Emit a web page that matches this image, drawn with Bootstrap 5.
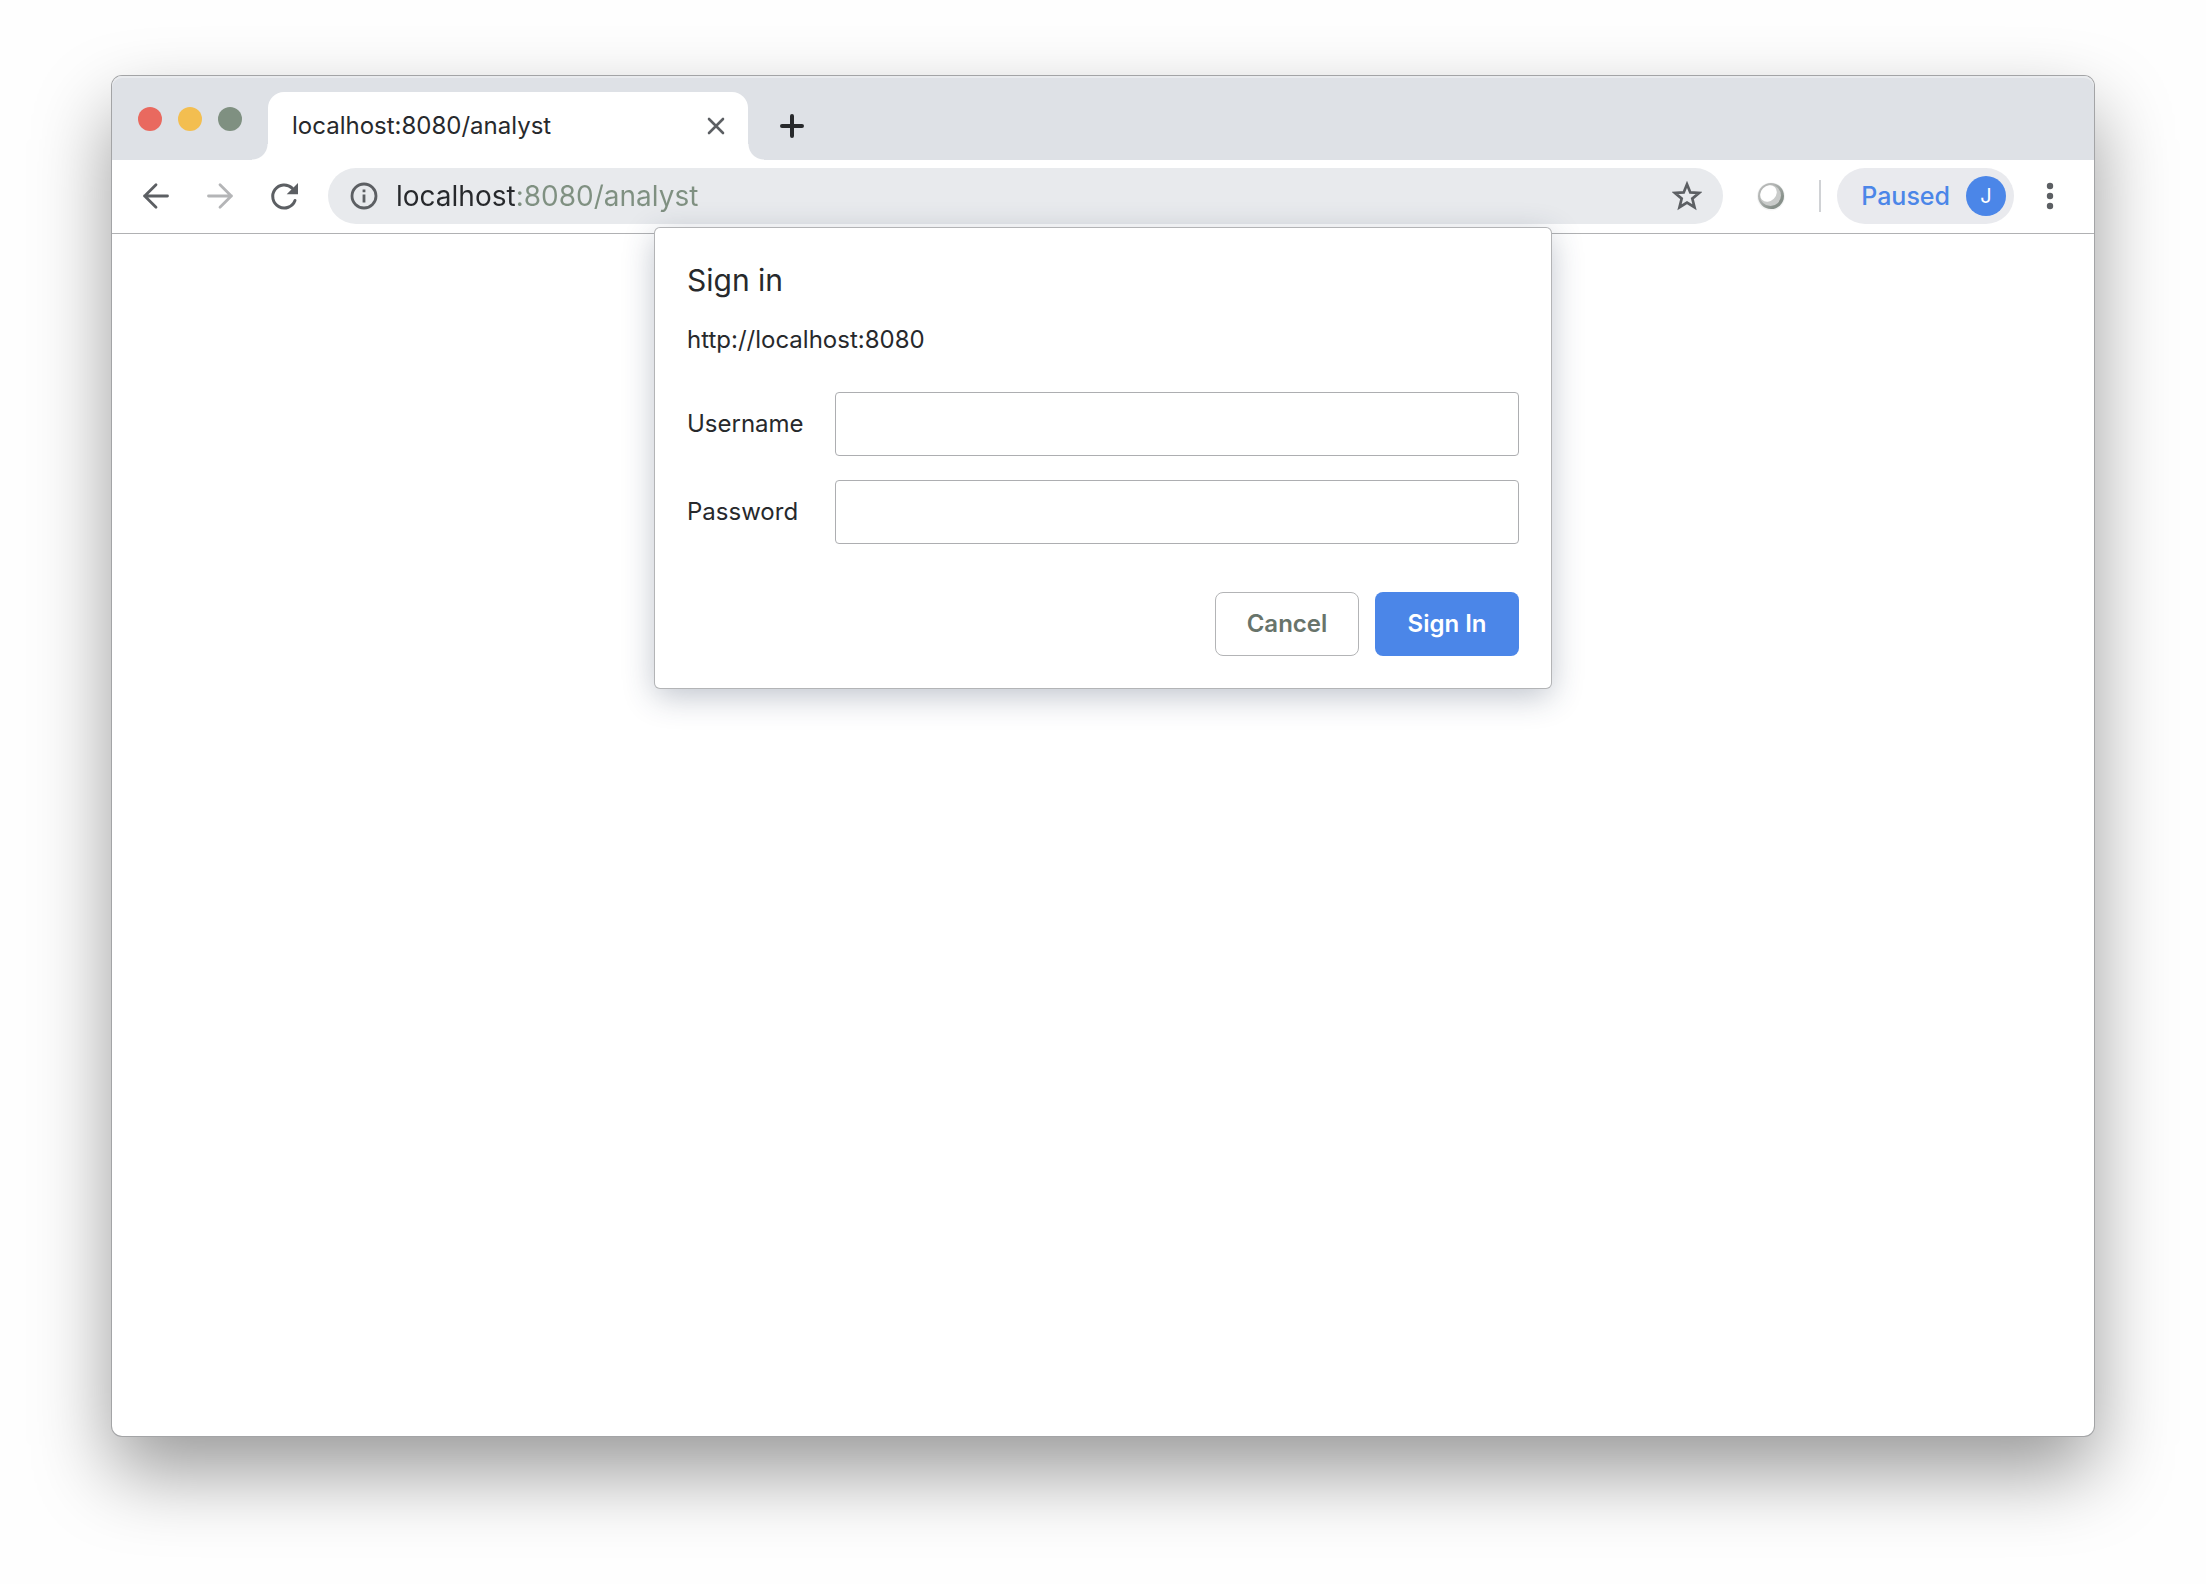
<!DOCTYPE html>
<html lang="en">
<head>
<meta charset="utf-8">
<meta name="viewport" content="width=device-width, initial-scale=1">
<title>localhost:8080/analyst</title>
<link rel="stylesheet" href="https://cdn.jsdelivr.net/npm/bootstrap@5.3.0/dist/css/bootstrap.min.css">
<style>
  :root {
    --ink: #27292c;
    --icon: #5c5f63;
    --sage: #7f9081;
    --strip: #dee1e6;
    --field: #e8eaed;
    --blue: #4b86e8;
  }
  body {
    font-family: Inter, "Liberation Sans", sans-serif;
    font-size: 24px;
    line-height: 32px;
    color: var(--ink);
    background: #fefefe;
    padding: 76px 112px 148px;
  }
  .browser {
    border-radius: 10px;
    background: #fff;
    box-shadow: 0 0 0 1px #a3a4a6, 0 36px 78px rgba(0, 0, 0, .4);
  }
  .tab-strip {
    height: 84px;
    padding: 16px 26px 0;
    background: var(--strip);
    border-radius: 10px 10px 0 0;
    box-shadow: inset 0 2px #e9ebee;
  }
  .lights { gap: 16px; margin-right: 26px; padding-top: 15px; }
  .light { width: 24px; height: 24px; border-radius: 50%; }
  .light-close { background: #e9695f; }
  .light-min { background: #f3be50; }
  .light-max { background: var(--sage); }
  .page-tab {
    position: relative;
    width: 480px;
    height: 68px;
    padding: 0 16px 0 24px;
    background: #fff;
    border-radius: 16px 16px 0 0;
  }
  .page-tab::before, .page-tab::after {
    content: "";
    position: absolute;
    bottom: 0;
    width: 16px;
    height: 16px;
  }
  .page-tab::before { right: 100%; background: radial-gradient(circle at 0 0, transparent 15px, #fff 16px); }
  .page-tab::after { left: 100%; background: radial-gradient(circle at 100% 0, transparent 15px, #fff 16px); }
  .ico-btn {
    display: flex;
    align-items: center;
    justify-content: center;
    flex: none;
    width: 32px;
    height: 32px;
    padding: 0;
    border: 0;
    background: none;
    color: var(--icon);
  }
  .ico-btn:disabled { color: #b4b5b7; }
  .ico-new { color: var(--ink); margin: 18px 0 0 28px; }
  .toolbar {
    height: 74px;
    padding: 8px 28px 9px;
    border-bottom: 1px solid #b0b1b3;
  }
  .nav-icons { gap: 32px; margin-right: 28px; }
  .omnibox {
    height: 56px;
    padding: 0 20px;
    border-radius: 28px;
    background: var(--field);
    gap: 16px;
  }
  .address {
    min-width: 0;
    padding: 0;
    border: 0;
    outline: 0;
    font-size: 28px;
    line-height: 40px;
    color: transparent;
    background: linear-gradient(90deg, var(--ink) 119px, var(--sage) 119px);
    -webkit-background-clip: text;
    background-clip: text;
  }
  .extension { margin: 0 32px; }
  .divider { width: 2px; height: 32px; background: #d0d2d5; }
  .profile {
    height: 56px;
    margin: 0 20px 0 16px;
    padding: 0 8px 0 24px;
    gap: 16px;
    border: 0;
    border-radius: 28px;
    background: #e9eaee;
    color: var(--blue);
    font-size: 25px;
    font-weight: 500;
  }
  .avatar {
    width: 40px;
    height: 40px;
    border-radius: 50%;
    background: var(--blue);
    color: #fff;
    font-size: 20px;
    font-weight: 400;
  }
  .signin {
    z-index: 1;
    width: 896px;
    max-width: 100%;
    margin-top: -6px;
    padding: 32px;
    border-radius: 5px;
    background: #fff;
    box-shadow: 0 0 0 1px #b3b4b6, 0 8px 32px rgba(40, 55, 85, .3);
  }
  .signin-title { font-size: 30px; line-height: 40px; font-weight: 400; margin: 0 0 24px; }
  .origin { margin: 0 0 36px; }
  .field-row { margin-bottom: 24px; }
  .field-name { width: 148px; flex: none; }
  .signin .form-control {
    height: 64px;
    border: 1px solid #adaeb1;
    border-radius: 4px;
    font-size: 24px;
    padding: 0 16px;
  }
  .actions { gap: 16px; margin-top: 48px; }
  .signin .btn {
    width: 144px;
    height: 64px;
    padding: 0;
    border-radius: 8px;
    font-size: 24px;
    font-weight: 600;
  }
  .signin .btn-dismiss { color: #68746b; border: 1px solid #b3b4b6; background: #fff; }
  .signin .btn-submit { color: #fff; background: var(--blue); border: 0; }
</style>
</head>
<body class="d-flex flex-column min-vh-100">
<div class="browser flex-grow-1 d-flex flex-column">
  <header>
    <div class="tab-strip d-flex align-items-start">
      <div class="lights d-flex">
        <span class="light light-close"></span>
        <span class="light light-min"></span>
        <span class="light light-max"></span>
      </div>
      <div class="page-tab d-flex align-items-center justify-content-between">
        <span class="text-truncate">localhost:8080/analyst</span>
        <button class="ico-btn" type="button" aria-label="Close tab">
          <svg width="18" height="18" viewBox="0 0 18 18" fill="none" stroke="currentColor" stroke-width="2.6" stroke-linecap="round"><path d="M2 2l14 14M16 2L2 16"/></svg>
        </button>
      </div>
      <button class="ico-btn ico-new" type="button" aria-label="New tab">
        <svg width="24" height="24" viewBox="0 0 24 24" fill="none" stroke="currentColor" stroke-width="4" stroke-linecap="round"><path d="M12 2v20M2 12h20"/></svg>
      </button>
    </div>
    <div class="toolbar d-flex align-items-center">
      <nav class="nav-icons d-flex" aria-label="History">
        <button class="ico-btn" type="button" aria-label="Back">
          <svg width="28" height="28" viewBox="0 0 28 28" fill="none" stroke="currentColor" stroke-width="2.8" stroke-linecap="round" stroke-linejoin="round"><path d="M25.500 14H2.500M14 2.700L2.700 14 14 25.300"/></svg>
        </button>
        <button class="ico-btn" type="button" aria-label="Forward" disabled>
          <svg width="28" height="28" viewBox="0 0 28 28" fill="none" stroke="currentColor" stroke-width="2.800" stroke-linecap="round" stroke-linejoin="round"><path d="M2.500 14h23M14 2.700L25.300 14 14 25.300"/></svg>
        </button>
        <button class="ico-btn" type="button" aria-label="Reload">
          <svg width="32" height="32" viewBox="0 0 32 32"><path d="M24.200 8.200A11.500 11.500 0 1 0 27 20.500" fill="none" stroke="currentColor" stroke-width="3" stroke-linecap="round"/><path d="M30 3v11.300H18.700z" fill="currentColor"/></svg>
        </button>
      </nav>
      <div class="omnibox flex-grow-1 d-flex align-items-center">
        <button class="ico-btn" type="button" aria-label="View site information">
          <svg width="28" height="28" viewBox="0 0 28 28"><circle cx="14" cy="14" r="12" fill="none" stroke="currentColor" stroke-width="2.800"/><path d="M12.600 12.600h2.800v8h-2.800zM12.600 7.400h2.800v2.800h-2.800z" fill="currentColor"/></svg>
        </button>
        <input class="address flex-grow-1" type="text" value="localhost:8080/analyst" aria-label="Address">
        <button class="ico-btn" type="button" aria-label="Bookmark this page">
          <svg width="30" height="30" viewBox="0 0 30 30"><path d="M15 3.300l3.300 8.100 8.700.6-6.700 5.600 2.200 8.600-7.500-4.700-7.500 4.700 2.200-8.600L3 12l8.700-.6z" fill="none" stroke="currentColor" stroke-width="2.700"/></svg>
        </button>
      </div>
      <button class="ico-btn extension" type="button" aria-label="Extension">
        <svg width="32" height="32" viewBox="0 0 32 32">
          <defs><linearGradient id="rim" x1="0" y1="0" x2="1" y2="1"><stop offset=".3" stop-color="#b5b7b6"/><stop offset=".75" stop-color="#87908a"/></linearGradient></defs>
          <circle cx="16" cy="16.500" r="14" fill="#f3f4f4"/>
          <circle cx="16" cy="16" r="13" fill="url(#rim)"/>
          <circle cx="15.500" cy="15.500" r="10.500" fill="#c9cbca"/>
          <ellipse cx="13.500" cy="13.500" rx="9" ry="7.500" transform="rotate(-45 13.500 13.500)" fill="#fff"/>
        </svg>
      </button>
      <span class="divider"></span>
      <button class="profile d-flex align-items-center" type="button">Paused <span class="avatar d-flex align-items-center justify-content-center">J</span></button>
      <button class="ico-btn" type="button" aria-label="Menu">
        <svg width="28" height="28" viewBox="0 0 28 28" fill="currentColor"><circle cx="14" cy="4" r="3.200"/><circle cx="14" cy="14" r="3.200"/><circle cx="14" cy="24" r="3.200"/></svg>
      </button>
    </div>
  </header>
  <main class="d-flex justify-content-center align-items-start">
    <form class="signin position-relative" role="dialog" aria-labelledby="signin-title">
      <h1 class="signin-title" id="signin-title">Sign in</h1>
      <p class="origin">http://localhost:8080</p>
      <div class="field-row d-flex align-items-center">
        <label class="field-name" for="username">Username</label>
        <input class="form-control" id="username" type="text" autocomplete="username">
      </div>
      <div class="field-row d-flex align-items-center">
        <label class="field-name" for="password">Password</label>
        <input class="form-control" id="password" type="password" autocomplete="current-password">
      </div>
      <div class="actions d-flex justify-content-end">
        <button class="btn btn-dismiss" type="button">Cancel</button>
        <button class="btn btn-submit" type="submit">Sign In</button>
      </div>
    </form>
  </main>
</div>
<script src="https://cdn.jsdelivr.net/npm/bootstrap@5.3.0/dist/js/bootstrap.bundle.min.js"></script>
</body>
</html>
